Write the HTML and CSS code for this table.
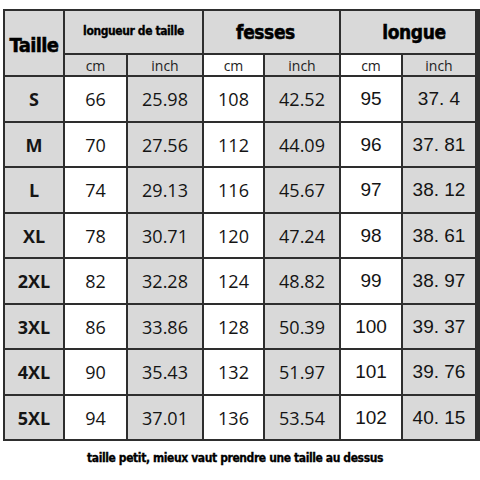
FILE: index.html
```html
<!DOCTYPE html>
<html>
<head>
<meta charset="utf-8">
<link rel="stylesheet" href="styles.css">
</head>
<body>
<div class="page">
  <div class="chart">
    <div class="cell hd size-hd">Taille</div>
    <div class="cell hd group small">longueur de taille</div>
    <div class="cell hd group left">fesses</div>
    <div class="cell hd group right">longue</div>
    <div class="cell hd sub">cm</div>
    <div class="cell hd sub">inch</div>
    <div class="cell hd sub white">cm</div>
    <div class="cell hd sub">inch</div>
    <div class="cell hd sub white">cm</div>
    <div class="cell hd sub">inch</div>

    <div class="cell sz">S</div><div class="cell n">66</div><div class="cell n g">25.98</div><div class="cell n">108</div><div class="cell n g">42.52</div><div class="cell a">95</div><div class="cell a g">37. 4</div>
    <div class="cell sz">M</div><div class="cell n">70</div><div class="cell n g">27.56</div><div class="cell n">112</div><div class="cell n g">44.09</div><div class="cell a">96</div><div class="cell a g">37. 81</div>
    <div class="cell sz">L</div><div class="cell n">74</div><div class="cell n g">29.13</div><div class="cell n">116</div><div class="cell n g">45.67</div><div class="cell a">97</div><div class="cell a g">38. 12</div>
    <div class="cell sz">XL</div><div class="cell n">78</div><div class="cell n g">30.71</div><div class="cell n">120</div><div class="cell n g">47.24</div><div class="cell a">98</div><div class="cell a g">38. 61</div>
    <div class="cell sz">2XL</div><div class="cell n">82</div><div class="cell n g">32.28</div><div class="cell n">124</div><div class="cell n g">48.82</div><div class="cell a">99</div><div class="cell a g">38. 97</div>
    <div class="cell sz">3XL</div><div class="cell n">86</div><div class="cell n g">33.86</div><div class="cell n">128</div><div class="cell n g">50.39</div><div class="cell a">100</div><div class="cell a g">39. 37</div>
    <div class="cell sz">4XL</div><div class="cell n">90</div><div class="cell n g">35.43</div><div class="cell n">132</div><div class="cell n g">51.97</div><div class="cell a">101</div><div class="cell a g">39. 76</div>
    <div class="cell sz">5XL</div><div class="cell n">94</div><div class="cell n g">37.01</div><div class="cell n">136</div><div class="cell n g">53.54</div><div class="cell a">102</div><div class="cell a g">40. 15</div>
  </div>
  <div class="note">taille petit, mieux vaut prendre une taille au dessus</div>
</div>
</body>
</html>
```
FILE: styles.css
```css
html, body {
  margin: 0;
  padding: 0;
  background: #ffffff;
}
.page {
  width: 480px;
  height: 480px;
  padding: 9px 0 0 3px;
  box-sizing: border-box;
}
.chart {
  display: grid;
  width: 474px;
  grid-template-columns: 58px 61px 74px 59px 74px 60px 72px;
  grid-template-rows: 42px 20px repeat(4, 44px 43px);
  gap: 2px;
  padding: 2px;
  background: #2e2e2e;
}
.cell {
  background: #ffffff;
  display: flex;
  align-items: center;
  justify-content: center;
  color: #141414;
  white-space: pre;
}
.hd {
  background: #d9d9d9;
}
.size-hd {
  grid-row: span 2;
  font-family: "DejaVu Sans Condensed", "DejaVu Sans", sans-serif;
  font-stretch: condensed;
  font-weight: bold;
  font-size: 20px;
  letter-spacing: -0.6px;
  color: #000;
  padding-top: 4px;
  -webkit-text-stroke: 0.5px #000;
}
.group {
  grid-column: span 2;
  font-family: "DejaVu Sans Condensed", "DejaVu Sans", sans-serif;
  font-stretch: condensed;
  font-weight: bold;
  font-size: 19px;
  letter-spacing: -0.4px;
  color: #000;
  -webkit-text-stroke: 0.5px #000;
}
.group.left {
  padding-right: 12px;
}
.group.right {
  padding-left: 12px;
}
.group.small {
  font-size: 12px;
  letter-spacing: -0.4px;
  padding-bottom: 2px;
  -webkit-text-stroke: 0.3px #000;
}
.sub {
  font-family: "Open Sans", sans-serif;
  font-size: 14px;
  color: #222;
}
.sub.white {
  background: #ffffff;
}
.sz {
  background: #d9d9d9;
  font-family: "Open Sans", sans-serif;
  font-weight: bold;
  font-size: 18px;
  color: #151515;
}
.n {
  font-family: "Open Sans", sans-serif;
  font-size: 18px;
}
.a {
  font-family: "Liberation Sans", sans-serif;
  font-size: 19px;
}
.g {
  background: #d9d9d9;
}
.note {
  width: 474px;
  margin-top: 10px;
  padding-right: 10px;
  box-sizing: border-box;
  text-align: center;
  font-family: "DejaVu Sans Condensed", "DejaVu Sans", sans-serif;
  font-stretch: condensed;
  font-weight: bold;
  font-size: 12px;
  letter-spacing: -0.4px;
  color: #000;
  -webkit-text-stroke: 0.3px #000;
}
```
